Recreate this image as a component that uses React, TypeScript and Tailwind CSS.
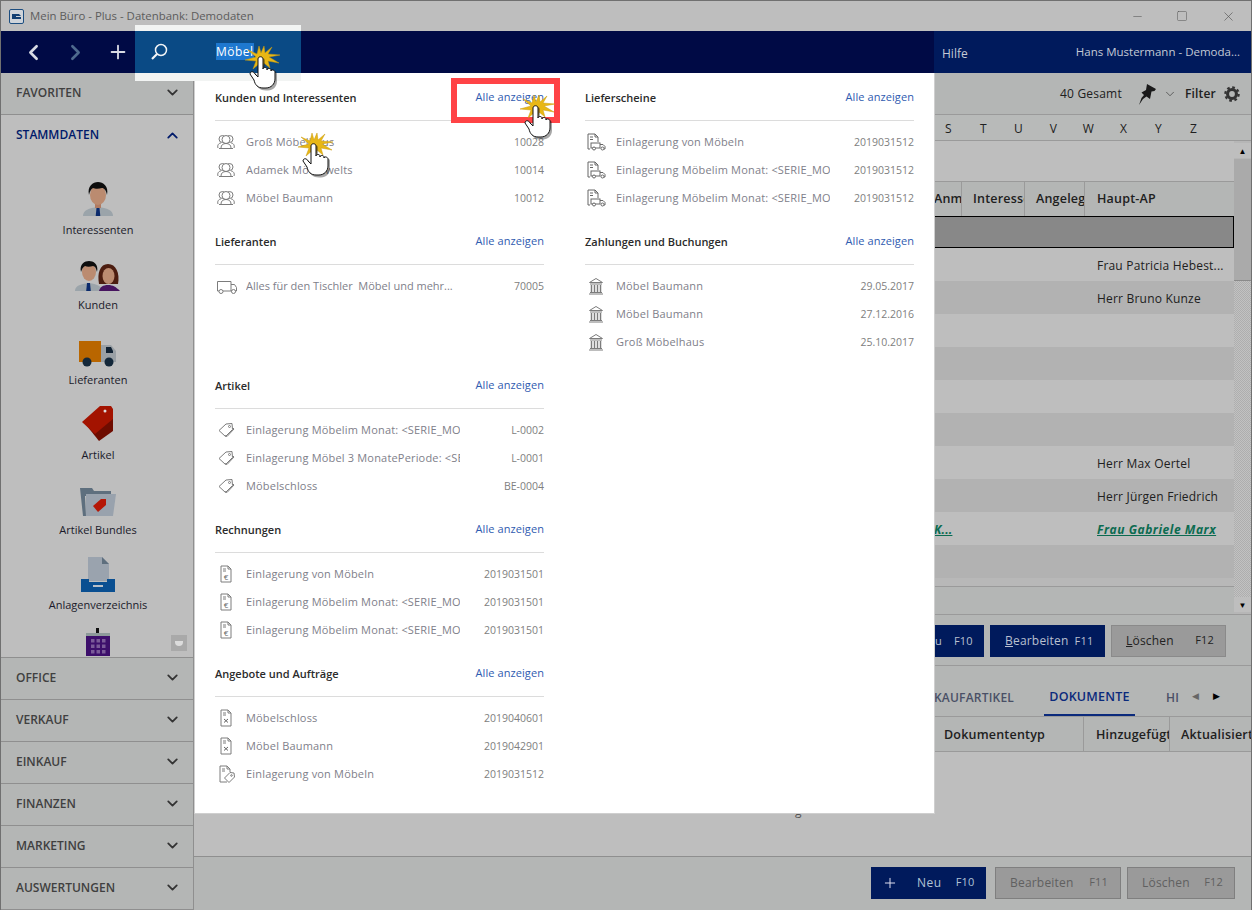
import React from 'react';
import { ChevronDown, ChevronUp, Minus, Square, X, Plus, ChevronLeft, ChevronRight } from 'lucide-react';

type ListRow = { name: string; id: string; icon?: React.FC };
type Section = { title: string; icon: React.FC; rows: ListRow[] };

const OutlineSvg: React.FC<{ children: React.ReactNode; w?: number }> = ({ children, w = 20 }) => (
  <svg width={w} height="20" viewBox={`0 0 ${w} 20`} fill="none" stroke="#7c7c7c" strokeWidth="1" className="shrink-0">
    {children}
  </svg>
);

const PeopleIcon = () => (
  <OutlineSvg>
    <circle cx="6.500" cy="7" r="3.500" />
    <circle cx="13.500" cy="7" r="3.500" />
    <circle cx="10" cy="7.500" r="4" fill="#fff" />
    <path d="M2 16c-1-3 1-5 3-5M18 16c1-3-1-5-3-5M3 16.500h14M5 16c0-3 2-4.500 5-4.500s5 1.500 5 4.500" />
  </OutlineSvg>
);

const TruckIcon = () => (
  <OutlineSvg w={22}>
    <path d="M3 15H1.500V5.500H15V15H7M15 8.500h3.500l2 3V15h-1.500M15 15h1" />
    <circle cx="5" cy="15.500" r="2" />
    <circle cx="17.500" cy="15.500" r="2" />
  </OutlineSvg>
);

const TagIcon = () => (
  <OutlineSvg>
    <path d="M3 10.500 10 4l6-.5.500 6-7 7z" />
    <path d="M17 8l1 1-7 7.500-2-1" />
    <circle cx="13.500" cy="6.500" r="1" />
  </OutlineSvg>
);

const DocShape = () => <path d="M5 2h7l3 3v13H5zM12 2v3h3M7 5h3M7 7h3" />;

const InvoiceIcon = () => (
  <OutlineSvg>
    <DocShape />
    <text x="10" y="15.500" textAnchor="middle" fontSize="8" fill="#666" stroke="none">€</text>
  </OutlineSvg>
);

const QuoteIcon = () => (
  <OutlineSvg>
    <DocShape />
    <path d="M8 11l4 3.500M12 11l-4 3.500" stroke="#666" />
  </OutlineSvg>
);

const DocTagIcon = () => (
  <OutlineSvg>
    <path d="M11 18H4V2h7l3 3v3M11 2v3h3M6 5h3M6 7h3" />
    <path d="M8.500 14 14 8.500l4 .5.500 4-5.500 5.500z" fill="#fff" />
    <circle cx="15.500" cy="11.500" r=".8" />
  </OutlineSvg>
);

const DeliveryIcon = () => (
  <OutlineSvg w={21}>
    <path d="M4 17H2V2h7l3 3v5M9 2v3h3M4 5h3M4 7.500h3" stroke="#666" />
    <rect x="5" y="11" width="9" height="5" stroke="#666" />
    <path d="M14 12.500h3l2 2V17h-2" stroke="#666" />
    <circle cx="8" cy="16.500" r="1.500" fill="#fff" stroke="#666" />
    <circle cx="16.500" cy="16.500" r="1.500" fill="#fff" stroke="#666" />
  </OutlineSvg>
);

const BankIcon = () => (
  <OutlineSvg>
    <path d="M10 2.500 3.500 6.500h13z M4 8h12M4 16.500h12M3 18h14" />
    <path d="M5.500 9v7M8.500 9v7M11.500 9v7M14.500 9v7" strokeWidth="1.500" />
  </OutlineSvg>
);

const leftSections: Section[] = [
  {
    title: 'Kunden und Interessenten',
    icon: PeopleIcon,
    rows: [
      { name: 'Groß Möbelhaus', id: '10028' },
      { name: 'Adamek Möbelwelts', id: '10014' },
      { name: 'Möbel Baumann', id: '10012' },
    ],
  },
  {
    title: 'Lieferanten',
    icon: TruckIcon,
    rows: [{ name: 'Alles für den Tischler  Möbel und mehr...', id: '70005' }],
  },
  {
    title: 'Artikel',
    icon: TagIcon,
    rows: [
      { name: 'Einlagerung Möbelim Monat: <SERIE_MONAT>', id: 'L-0002' },
      { name: 'Einlagerung Möbel 3 MonatePeriode: <SERIE', id: 'L-0001' },
      { name: 'Möbelschloss', id: 'BE-0004' },
    ],
  },
  {
    title: 'Rechnungen',
    icon: InvoiceIcon,
    rows: [
      { name: 'Einlagerung von Möbeln', id: '2019031501' },
      { name: 'Einlagerung Möbelim Monat: <SERIE_MONAT>', id: '2019031501' },
      { name: 'Einlagerung Möbelim Monat: <SERIE_MONAT>', id: '2019031501' },
    ],
  },
  {
    title: 'Angebote und Aufträge',
    icon: QuoteIcon,
    rows: [
      { name: 'Möbelschloss', id: '2019040601' },
      { name: 'Möbel Baumann', id: '2019042901' },
      { name: 'Einlagerung von Möbeln', id: '2019031512', icon: DocTagIcon },
    ],
  },
];

const rightSections: Section[] = [
  {
    title: 'Lieferscheine',
    icon: DeliveryIcon,
    rows: [
      { name: 'Einlagerung von Möbeln', id: '2019031512' },
      { name: 'Einlagerung Möbelim Monat: <SERIE_MONAT>', id: '2019031512' },
      { name: 'Einlagerung Möbelim Monat: <SERIE_MONAT>', id: '2019031512' },
    ],
  },
  {
    title: 'Zahlungen und Buchungen',
    icon: BankIcon,
    rows: [
      { name: 'Möbel Baumann', id: '29.05.2017' },
      { name: 'Möbel Baumann', id: '27.12.2016' },
      { name: 'Groß Möbelhaus', id: '25.10.2017' },
    ],
  },
];

const PopupSection: React.FC<{ section: Section }> = ({ section }) => (
  <div className="h-[144px]">
    <div className="h-[37px] flex justify-between pt-[4px] border-b border-[#dcdcdc]">
      <span className="mt-[1px] text-[11px] leading-[18px] font-semibold text-[#2b2b2b]">{section.title}</span>
      <span className="text-[11px] tracking-[0.08px] leading-[18px] text-[#2f5bb0]">Alle anzeigen</span>
    </div>
    <div className="mt-[7px]">
      {section.rows.map((row, i) => {
        const Icon = row.icon ?? section.icon;
        return (
          <div key={i} className="h-[28px] flex items-center text-[11px] text-[#80808a]">
            <div className="w-[31px] pl-[1px] flex"><Icon /></div>
            <span className={`w-[214px] whitespace-pre overflow-hidden ${row.name.startsWith('Alles') ? '' : 'tracking-[0.18px]'}`}>
              {row.name}
            </span>
            <span className="ml-auto pt-[1px] text-[10.5px] text-[#808080]">{row.id}</span>
          </div>
        );
      })}
    </div>
  </div>
);

// Zeigerhand mit Klick-Stern aus dem Tutorial
const ClickHand: React.FC<{ className: string }> = ({ className }) => (
  <svg width="40" height="46" viewBox="0 0 40 46" className={`absolute z-30 ${className}`}>
    <polygon
      points="19,1 20,8 27,2 23,9 35,10 24,12 34,18 23,16 25,23 19,18 17,26 15,18 8,24 11,16 0,15 11,12 3,5 12,9 14,1 16,8"
      fill="#e8b715"
      stroke="#c99a10"
      strokeWidth=".5"
    />
    <path
      d="M19 44c-6 0-9-3-10-8l-4-7c0-3 4-3 5 0l3 3V14c0-3 5-3 5 0v10c0-2 4-2 4 0v1c0-2 4-2 4 0v1c0-2 4-1 4 1v8c0 5-4 9-9 9z"
      fill="#222"
      opacity=".4"
      transform="translate(2 1.500)"
    />
    <path
      d="M18 43c-5 0-8-3-9-8l-4-6c0-3 4-3 5 0l3 3V14c0-3 5-3 5 0v10c0-2 4-2 4 0v1c0-2 4-2 4 0v1c0-2 4-1 4 1v7c0 5-4 9-9 9z"
      fill="#fff"
      stroke="#111"
      strokeWidth="1"
    />
  </svg>
);

const PersonIcon = () => (
  <svg width="32" height="36" viewBox="0 0 32 36">
    <path d="M1 35c0-6 6-8 15-9 9 1 15 3 15 9z" fill="#9ba4aa" />
    <path d="M14.500 27h3l.8 8h-4.600z" fill="#0b2a6c" />
    <rect x="13" y="20" width="6" height="7" fill="#b07b62" />
    <ellipse cx="16" cy="14" rx="8" ry="10" fill="#bb8b70" />
    <path d="M7 14C5 5 11 1 16 1s11 4 9 13c-1-5-3-7-5-7-3 1-7 1-9 0-2 1-3 3-4 7z" fill="#0d0d0d" />
  </svg>
);

const CoupleIcon = () => (
  <svg width="46" height="32" viewBox="0 0 46 32">
    <path d="M0 31c0-5 5-7 14-8 8 1 12 3 14 8z" fill="#9ba4aa" />
    <path d="M12 23h3l.8 8h-4.600z" fill="#0b2a6c" />
    <ellipse cx="14" cy="12" rx="7" ry="9" fill="#bb8b70" />
    <path d="M6 12C4 4 10 1 14 1s10 3 8 11c-1-4-2-6-4-6-3 1-6 1-8 0-2 1-3 3-4 6z" fill="#0d0d0d" />
    <path d="M24 24C22 13 25 4 33 4s12 9 10 20z" fill="#4c1d10" />
    <path d="M24 31c1-4 4-6 9-6s8 2 12 6z" fill="#47145f" />
    <ellipse cx="33.500" cy="16" rx="6" ry="8" fill="#bb8b70" />
  </svg>
);

const TruckColorIcon = () => (
  <svg width="38" height="26" viewBox="0 0 38 26">
    <rect x="0" y="0" width="22" height="21" fill="#b96600" />
    <path d="M22 4h10l5 6v11H22z" fill="#9aa0a5" />
    <path d="M27 6h5l2 4v2h-7z" fill="#112233" />
    <circle cx="8" cy="21" r="4.500" fill="#14283a" />
    <circle cx="30" cy="21" r="4.500" fill="#14283a" />
  </svg>
);

const TagColorIcon = () => (
  <svg width="32" height="36" viewBox="0 0 32 36">
    <path d="M5 20 26 9l5 1v15L17 35z" fill="#6e0c00" />
    <path d="M0 16 18 0h11l2 3v10L13 28z" fill="#a31300" />
    <circle cx="23" cy="5" r="1.500" fill="#ddd" />
  </svg>
);

const FolderIcon = () => (
  <svg width="36" height="30" viewBox="0 0 36 30">
    <path d="M0 1h12l2 3h17v5H5l1 20H3z" fill="#5e6f7e" />
    <path d="M6 7h30l-3 22H6z" fill="#99a2ad" />
    <path d="M13 19 21 12h5v6l-8 7z" fill="#b51707" />
  </svg>
);

const InboxIcon = () => (
  <svg width="34" height="35" viewBox="0 0 34 35">
    <path d="M7 0h14l7 7v17H7z" fill="#9aa3ae" />
    <path d="M21 0l7 7h-7z" fill="#5e6f7e" />
    <path d="M0 22h8v3h18v-3h8v13H0z" fill="#0a4f91" />
    <rect x="12" y="28" width="10" height="2" fill="#b9c0c8" />
  </svg>
);

const CalendarIcon = () => (
  <svg width="24" height="28" viewBox="0 0 24 28">
    <rect x="10" y="0" width="3" height="6" fill="#111" />
    <rect x="0" y="5" width="24" height="23" fill="#3d0f6b" />
    <rect x="0" y="5" width="24" height="3" fill="#8d9a9a" />
    {[0, 1, 2].flatMap(r =>
      [0, 1, 2].map(c => <rect key={`${r}${c}`} x={5 + c * 5.500} y={11 + r * 5.500} width="3.500" height="3.500" fill="#7a5a98" />)
    )}
  </svg>
);

const PushPin = () => (
  <svg width="17" height="21" viewBox="0 0 17 21" className="mr-[7px]">
    <path d="M8 0l9 5-1.500 2-3 .5L11 15 7.500 12.500 4 15l-4 6 2.500-7L5 11 2.500 8.500 7 6z" fill="#1a1a1a" />
  </svg>
);

const Gear = () => (
  <svg width="16" height="16" viewBox="0 0 18 18" fill="none" stroke="#333">
    <circle cx="9" cy="9" r="5" strokeWidth="3.500" />
    <circle cx="9" cy="9" r="7.500" strokeWidth="2.500" strokeDasharray="3 2.890" />
  </svg>
);

const sideItems: { label: string; icon: React.ReactNode }[] = [
  { label: 'Interessenten', icon: <PersonIcon /> },
  { label: 'Kunden', icon: <CoupleIcon /> },
  { label: 'Lieferanten', icon: <TruckColorIcon /> },
  { label: 'Artikel', icon: <TagColorIcon /> },
  { label: 'Artikel Bundles', icon: <FolderIcon /> },
  { label: 'Anlagenverzeichnis', icon: <InboxIcon /> },
];

const SideHeader: React.FC<{ label: string; open?: boolean }> = ({ label, open }) => (
  <div
    className={`h-[42px] shrink-0 flex items-center justify-between pl-[15px] pr-[12px] pb-[2px] text-[12px] font-semibold ${
      open ? 'bg-[#bebebe] text-[#001a6a]' : 'bg-[#b4b6b5] text-[#404040] border-b border-[#8f8f8f]'
    }`}
  >
    <span>{label}</span>
    {open ? (
      <ChevronUp size={17} strokeWidth={2.500} color="#001a6a" />
    ) : (
      <ChevronDown size={17} strokeWidth={2.500} color="#333" />
    )}
  </div>
);

const tableRows: { name?: string; link?: boolean }[] = [
  { name: 'Frau Patricia Hebest...' },
  { name: 'Herr Bruno Kunze' },
  {},
  {},
  {},
  {},
  { name: 'Herr Max Oertel' },
  { name: 'Herr Jürgen Friedrich' },
  { name: 'Frau Gabriele Marx', link: true },
  {},
];

const letters = ['S', 'T', 'U', 'V', 'W', 'X', 'Y', 'Z'];

export default function App() {
  return (
    <div className="relative w-[1252px] h-[910px] overflow-hidden bg-[#bebebe] border-x border-[#707070] flex flex-col font-['Open_Sans',sans-serif]">
      {/* Titelleiste */}
      <div className="h-[31px] shrink-0 flex items-center bg-[#bebebe] border-t border-[#707070] pl-[8px] text-[11.4px] text-[#5c5c5c]">
        <svg width="15" height="15" viewBox="0 0 15 15" className="mr-[6px]">
          <rect x=".5" y=".5" width="14" height="14" rx="1.500" fill="#cfd4da" stroke="#1d4e80" />
          <path d="M3 5h7l2 2H7v1h5v2H3z" fill="#123f73" />
        </svg>
        <span>Mein Büro - Plus - Datenbank: Demodaten</span>
        <div className="ml-auto flex items-center text-[#505050]">
          <Minus size={13} strokeWidth={1} className="mr-[32px]" />
          <Square size={12} strokeWidth={1} className="mr-[33px]" />
          <X size={15} strokeWidth={1} className="mr-[15px]" />
        </div>
      </div>

      {/* Navigation */}
      <div className="h-[42px] shrink-0 flex bg-[#001a5c]">
        <div className="w-[933px] flex bg-[#000a45]">
          <div className="w-[134px] flex items-center pl-[20px] text-[#d8dbe4]">
            <ChevronLeft size={25} strokeWidth={2.500} />
            <ChevronRight size={25} strokeWidth={2.500} color="#4e6a8e" className="ml-[17px]" />
            <Plus size={22} strokeWidth={2} className="ml-[19px]" />
          </div>
          <div className="relative z-20 w-[166px]">
            <div className="absolute left-0 right-0 -top-[6px] -bottom-[8px] bg-[#f2f4f3]" />
            <div className="relative h-full flex items-center bg-[#0a4a85] pl-[15px]">
              <svg width="18" height="18" viewBox="0 0 18 18" fill="none" stroke="#f2f4f6" strokeWidth="1.500">
                <circle cx="11" cy="7" r="5.500" />
                <path d="M7 11l-5 5" strokeWidth="2.200" />
              </svg>
              <span className="ml-[48px] bg-[#1e78d0] text-white text-[12px] tracking-[0.5px] leading-[16px] pt-[1px] -mt-[1px]">Möbel</span>
            </div>
          </div>
        </div>
        <div className="flex-1 flex items-center justify-between pl-[8px] pr-[11px] text-[12px] text-[#c4cad6]">
          <span className="mt-[4px]">Hilfe</span>
          <span className="text-[11.5px] -mt-[1px]">Hans Mustermann - Demoda...</span>
        </div>
      </div>

      <div className="flex-1 flex min-h-0">
        {/* Seitenleiste */}
        <aside className="relative w-[193px] shrink-0 flex flex-col border-r border-[#8f8f8f] bg-[#bebebe]">
          <SideHeader label="FAVORITEN" />
          <SideHeader label="STAMMDATEN" open />
          <div className="flex-1 min-h-0 overflow-hidden flex flex-col items-center pl-[2px] border-b border-[#8f8f8f]">
            {sideItems.map(item => (
              <div key={item.label} className="h-[75px] shrink-0 flex flex-col items-center justify-end">
                {item.icon}
                <span className="text-[11px] leading-[16px] mt-[5px] mb-[-6px] text-[#1a1a2a] whitespace-nowrap">{item.label}</span>
              </div>
            ))}
            <div className="mt-[21px] shrink-0"><CalendarIcon /></div>
          </div>
          <div className="absolute left-[170px] top-[562px] w-[16px] h-[16px] bg-[#a9a9a9] flex items-center justify-center">
            <div className="w-[8px] h-[5px] bg-[#dcdcdc] rounded-b-full" />
          </div>
          <SideHeader label="OFFICE" />
          <SideHeader label="VERKAUF" />
          <SideHeader label="EINKAUF" />
          <SideHeader label="FINANZEN" />
          <SideHeader label="MARKETING" />
          <SideHeader label="AUSWERTUNGEN" />
        </aside>

        {/* Hauptbereich hinter dem Popup */}
        <main className="flex-1 min-w-0 flex flex-col text-[12px] tracking-[0.2px] text-[#202020]">
          <div className="h-[42px] shrink-0 bg-[#b4b6b5] border-b border-[#9a9a9a] flex items-center justify-end pr-[11px] pt-[1px]">
            <span className="mr-[17px]">40 Gesamt</span>
            <PushPin />
            <ChevronDown size={14} strokeWidth={1} className="mr-[8px]" />
            <span className="font-semibold mr-[8px]">Filter</span>
            <Gear />
          </div>
          <div className="h-[26px] shrink-0 bg-[#b8bab9] border-b border-[#9a9a9a] flex items-center pl-[737px] pt-[2px]">
            {letters.map(l => (
              <span key={l} className="w-[35px] text-center">{l}</span>
            ))}
          </div>
          <div className="h-[474px] shrink-0 flex border-b border-[#9a9a9a]">
            <div className="flex-1 min-w-0 flex flex-col">
              <div className="h-[40px] shrink-0 bg-[#bebebe]" />
              <div className="h-[35px] shrink-0 bg-[#b4b6b5] border-t border-[#9a9a9a] flex items-center pl-[740px] font-semibold text-[12.5px]">
                <div className="w-[28px] h-full flex items-center border-r border-[#9a9a9a] overflow-hidden whitespace-nowrap">Anmelden</div>
                <div className="w-[63px] h-full flex items-center pl-[11px] border-r border-[#9a9a9a] overflow-hidden whitespace-nowrap">Interessent</div>
                <div className="w-[60px] h-full flex items-center pl-[11px] border-r border-[#9a9a9a] overflow-hidden whitespace-nowrap">Angelegt</div>
                <div className="pl-[12px] pt-[1px]">Haupt-AP</div>
              </div>
              <div className="h-[32px] shrink-0 bg-[#888888] border border-black" />
              {tableRows.map((row, i) => (
                <div
                  key={i}
                  className={`h-[33px] shrink-0 flex items-center pl-[740px] pt-[2px] ${i % 2 === 0 ? 'bg-[#bebebe]' : 'bg-[#b2b2b2]'}`}
                >
                  <span className={`w-[163px] shrink-0 ${row.link ? 'font-bold italic underline text-[#0b6b50]' : ''}`}>
                    {row.link ? 'K...' : ''}
                  </span>
                  <span className={`whitespace-nowrap ${row.link ? 'font-bold italic underline tracking-[0.55px] text-[#0b6b50]' : ''}`}>{row.name}</span>
                </div>
              ))}
              <div className="h-[9px] shrink-0 bg-[#b8b8b8] border-b border-[#9a9a9a]" />
              <div className="flex-1 bg-[#b4b6b5]" />
            </div>
            <div className="w-[17px] shrink-0 flex flex-col bg-[#b6b6b6] py-[2px]">
              <div className="h-[15px] bg-[#bebebe] flex items-center justify-center text-[8px] text-black">▲</div>
              <div className="h-[122px] mt-[1px] bg-[#aaaaaa] border-b border-[#8a8a8a]" />
              <div className="flex-1 bg-[repeating-conic-gradient(#aeaeae_0_25%,#c2c2c2_0_50%)] bg-[length:2px_2px]" />
              <div className="h-[15px] bg-[#bebebe] flex items-center justify-center text-[8px] text-black">▼</div>
            </div>
          </div>

          <div className="h-[51px] shrink-0 bg-[#b4b6b5] border-b border-[#9a9a9a] flex items-center pl-[740px] pt-[1px] text-[11px]">
            <div className="w-[50px] h-[32px] bg-[#001a5c] text-[#b9c0d0] flex items-center pl-[1px] pt-[1px]">
              <span>u</span>
              <span className="ml-[12px]">F10</span>
            </div>
            <div className="ml-[6px] w-[115px] h-[32px] bg-[#001a5c] text-[#b9c0d0] flex items-center pl-[15px] pt-[1px]">
              <span className="text-[12px]"><u>B</u>earbeiten</span>
              <span className="ml-[6px]">F11</span>
            </div>
            <div className="ml-[6px] w-[115px] h-[32px] bg-[#9a9a9a] border border-[#8a8a8a] text-[#222] flex items-center pl-[14px]">
              <span className="text-[12px]"><u>L</u>öschen</span>
              <span className="ml-auto mr-[11px]">F12</span>
            </div>
          </div>

          <div className="h-[51px] shrink-0 bg-[#b4b6b5] border-b border-[#9a9a9a] flex items-end pl-[740px] font-semibold">
            <span className="w-[110px] h-[39px] flex items-center pt-[2px] text-[#4a5066] whitespace-nowrap">KAUFARTIKEL</span>
            <span className="w-[91px] h-[39px] flex items-center justify-center pt-[4px] text-[12.5px] text-[#0b2a7c] border-b-[2px] border-[#0b2a7c]">DOKUMENTE</span>
            <span className="ml-[31px] w-[14px] h-[39px] flex items-center pt-[2px] text-[#4a5066] overflow-hidden">HI</span>
            <span className="ml-[12px] mb-[14px] text-[9px] text-[#666] font-normal">◀</span>
            <span className="ml-[14px] mb-[14px] text-[9px] text-black font-normal">▶</span>
          </div>

          <div className="h-[35px] shrink-0 bg-[#b4b6b5] border-b border-[#9a9a9a] flex pl-[750px] pt-[3px] font-semibold text-[12.5px]">
            <div className="w-[140px] flex items-center border-r border-[#9a9a9a] -mt-[3px] pt-[3px]">Dokumententyp</div>
            <div className="w-[86px] flex items-center pl-[12px] border-r border-[#9a9a9a] -mt-[3px] pt-[3px] overflow-hidden whitespace-nowrap">Hinzugefügt</div>
            <div className="flex-1 flex items-center pl-[11px] overflow-hidden whitespace-nowrap">Aktualisiert</div>
          </div>

          <div className="flex-1 bg-[#bebebe] pl-[601px] pt-[50px] leading-[18px] text-[#555]">g</div>

          <div className="h-[54px] shrink-0 bg-[#b4b6b5] border-t border-[#8f8f8f] flex items-center pl-[677px] pb-[2px] text-[11px]">
            <div className="w-[115px] h-[32px] bg-[#001a5c] text-[#b0c4d6] flex items-center pl-[11px]">
              <Plus size={16} strokeWidth={1.500} color="#dde" />
              <span className="ml-[19px] text-[12px] font-medium tracking-[0.5px]">Neu</span>
              <span className="ml-[14px]">F10</span>
            </div>
            <div className="ml-[9px] w-[126px] h-[32px] bg-[#9a9a9a] border border-[#7f7f7f] text-[#606060] flex items-center pl-[14px]">
              <span className="text-[12px]">Bearbeiten</span>
              <span className="ml-auto mr-[12px]">F11</span>
            </div>
            <div className="ml-[6px] w-[108px] h-[32px] bg-[#9a9a9a] border border-[#7f7f7f] text-[#606060] flex items-center pl-[14px]">
              <span className="text-[12px]">Löschen</span>
              <span className="ml-auto mr-[11px]">F12</span>
            </div>
          </div>
        </main>
      </div>

      {/* Such-Popup */}
      <div className="absolute z-10 left-[193px] top-[73px] w-[741px] h-[741px] bg-white border border-[#cfcfcf] border-t-0 pl-[20px] pr-[20px] pt-[11px] flex gap-[41px]">
        <div className="w-[329px] shrink-0">
          {leftSections.map(s => <PopupSection key={s.title} section={s} />)}
        </div>
        <div className="w-[329px] shrink-0">
          {rightSections.map(s => <PopupSection key={s.title} section={s} />)}
        </div>
      </div>

      {/* Markierung aus dem Tutorial */}
      <div className="absolute z-20 left-[450px] top-[78px] w-[109px] h-[45px] border-[6px] border-[#ff4346]" />

      <ClickHand className="left-[244px] top-[45px]" />
      <ClickHand className="left-[297px] top-[132px]" />
      <ClickHand className="left-[519px] top-[94px]" />
    </div>
  );
}
